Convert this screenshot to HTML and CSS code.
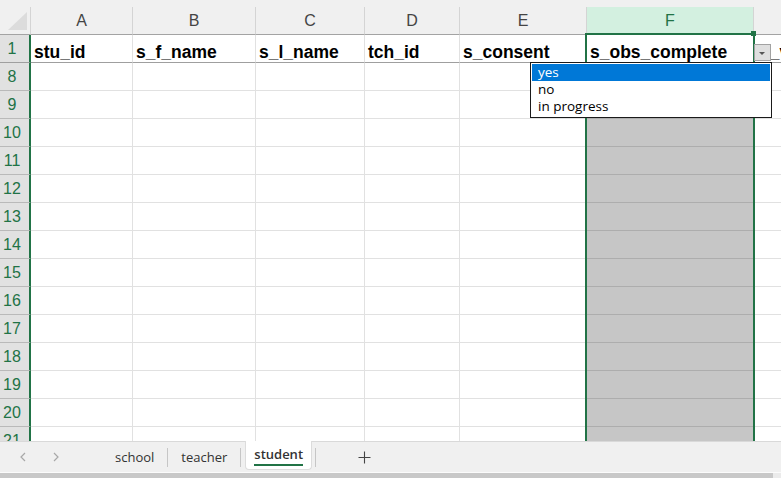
FILE: index.html
```html
<!DOCTYPE html>
<html lang="en">
<head>
	<meta charset="UTF-8">
	<title>student</title>
	<link rel="stylesheet" href="styles.css">
</head>
<body>

	<div class="sheet">
		<div class="strip"></div>

		<!-- Column headers -->
		<div class="row colheads">
			<div class="cell corner">
				<svg width="31" height="27" viewBox="0 0 31 27"><polygon points="8,23 27,23 27,5" fill="#dcdcdc"/></svg>
			</div>
			<div class="cell ca">A</div>
			<div class="cell cb">B</div>
			<div class="cell cc">C</div>
			<div class="cell cd">D</div>
			<div class="cell ce">E</div>
			<div class="cell cf active-col">F</div>
			<div class="cell cg"></div>
		</div>

		<!-- Frozen header row -->
		<div class="row r1">
			<div class="cell rh">1</div>
			<div class="cell ca">stu_id</div>
			<div class="cell cb">s_f_name</div>
			<div class="cell cc">s_l_name</div>
			<div class="cell cd">tch_id</div>
			<div class="cell ce">s_consent</div>
			<div class="cell cf">s_obs_complete</div>
			<div class="cell cg">s_vid</div>
		</div>

		<div class="row"><div class="cell rh">8</div><div class="cell ca"></div><div class="cell cb"></div><div class="cell cc"></div><div class="cell cd"></div><div class="cell ce"></div><div class="cell cf sel"></div><div class="cell cg"></div></div>
		<div class="row"><div class="cell rh">9</div><div class="cell ca"></div><div class="cell cb"></div><div class="cell cc"></div><div class="cell cd"></div><div class="cell ce"></div><div class="cell cf sel"></div><div class="cell cg"></div></div>
		<div class="row"><div class="cell rh">10</div><div class="cell ca"></div><div class="cell cb"></div><div class="cell cc"></div><div class="cell cd"></div><div class="cell ce"></div><div class="cell cf sel"></div><div class="cell cg"></div></div>
		<div class="row"><div class="cell rh">11</div><div class="cell ca"></div><div class="cell cb"></div><div class="cell cc"></div><div class="cell cd"></div><div class="cell ce"></div><div class="cell cf sel"></div><div class="cell cg"></div></div>
		<div class="row"><div class="cell rh">12</div><div class="cell ca"></div><div class="cell cb"></div><div class="cell cc"></div><div class="cell cd"></div><div class="cell ce"></div><div class="cell cf sel"></div><div class="cell cg"></div></div>
		<div class="row"><div class="cell rh">13</div><div class="cell ca"></div><div class="cell cb"></div><div class="cell cc"></div><div class="cell cd"></div><div class="cell ce"></div><div class="cell cf sel"></div><div class="cell cg"></div></div>
		<div class="row"><div class="cell rh">14</div><div class="cell ca"></div><div class="cell cb"></div><div class="cell cc"></div><div class="cell cd"></div><div class="cell ce"></div><div class="cell cf sel"></div><div class="cell cg"></div></div>
		<div class="row"><div class="cell rh">15</div><div class="cell ca"></div><div class="cell cb"></div><div class="cell cc"></div><div class="cell cd"></div><div class="cell ce"></div><div class="cell cf sel"></div><div class="cell cg"></div></div>
		<div class="row"><div class="cell rh">16</div><div class="cell ca"></div><div class="cell cb"></div><div class="cell cc"></div><div class="cell cd"></div><div class="cell ce"></div><div class="cell cf sel"></div><div class="cell cg"></div></div>
		<div class="row"><div class="cell rh">17</div><div class="cell ca"></div><div class="cell cb"></div><div class="cell cc"></div><div class="cell cd"></div><div class="cell ce"></div><div class="cell cf sel"></div><div class="cell cg"></div></div>
		<div class="row"><div class="cell rh">18</div><div class="cell ca"></div><div class="cell cb"></div><div class="cell cc"></div><div class="cell cd"></div><div class="cell ce"></div><div class="cell cf sel"></div><div class="cell cg"></div></div>
		<div class="row"><div class="cell rh">19</div><div class="cell ca"></div><div class="cell cb"></div><div class="cell cc"></div><div class="cell cd"></div><div class="cell ce"></div><div class="cell cf sel"></div><div class="cell cg"></div></div>
		<div class="row"><div class="cell rh">20</div><div class="cell ca"></div><div class="cell cb"></div><div class="cell cc"></div><div class="cell cd"></div><div class="cell ce"></div><div class="cell cf sel"></div><div class="cell cg"></div></div>
		<div class="row"><div class="cell rh">21</div><div class="cell ca"></div><div class="cell cb"></div><div class="cell cc"></div><div class="cell cd"></div><div class="cell ce"></div><div class="cell cf sel"></div><div class="cell cg"></div></div>

		<!-- Column F selection outline -->
		<div class="selection"></div>
		<div class="handle"></div>

		<!-- Data validation dropdown -->
		<div class="dd-btn">
			<svg width="15" height="15" viewBox="0 0 15 15"><polygon points="4,7 10,7 7,10" fill="#555"/></svg>
		</div>
		<div class="dd-list">
			<div class="opt on">yes</div>
			<div class="opt">no</div>
			<div class="opt">in progress</div>
		</div>
	</div>

	<!-- Sheet tabs -->
	<div class="tabs">
		<div class="nav">
			<svg width="8" height="10" viewBox="0 0 8 10"><polyline points="6,1 2,5 6,9" fill="none" stroke="#a8a8a8" stroke-width="1.2"/></svg>
		</div>
		<div class="nav">
			<svg width="8" height="10" viewBox="0 0 8 10"><polyline points="2,1 6,5 2,9" fill="none" stroke="#a8a8a8" stroke-width="1.2"/></svg>
		</div>
		<div class="tab first">school</div>
		<div class="sep"></div>
		<div class="tab">teacher</div>
		<div class="sep"></div>
		<div class="tab current"><span>student</span></div>
		<div class="sep"></div>
		<div class="add">
			<svg width="13" height="13" viewBox="0 0 13 13"><path d="M6.5 0.5v12M0.5 6.5h12" stroke="#444" stroke-width="1.1"/></svg>
		</div>
	</div>

	<div class="scroll"><div class="thumb"></div></div>

</body>
</html>
```

FILE: styles.css
```css
body {
	margin: 0;
	width: 781px;
	height: 478px;
	overflow: hidden;
	background-color: #fff;
	font-family: "Liberation Sans", Arial, sans-serif;
}

.sheet {
	height: 441px;
	overflow: hidden;
	position: relative;
}

.strip {
	height: 7px;
	background-color: #f0f0f0;
}

.row {
	display: flex;
	height: 28px;
}

.cell {
	flex: none;
	box-sizing: border-box;
	height: 28px;
	border-right: 1px solid #e1e1e1;
	border-bottom: 1px solid #e1e1e1;
	overflow: hidden;
	white-space: nowrap;
}

.ca { width: 102px; }
.cb { width: 123px; }
.cc { width: 109px; }
.cd { width: 95px; }
.ce { width: 127px; }
.cf { width: 167px; }
.cg { width: 100px; }

/* Column headers */
.colheads .cell {
	background-color: #f0f0f0;
	border-right-color: #d4d4d4;
	border-bottom-color: #a3a3a3;
	color: #444;
	font-size: 16px;
	display: flex;
	align-items: center;
	justify-content: center;
}

.colheads .corner {
	width: 31px;
	display: block;
}

.colheads .active-col {
	background-color: #d3f0e0;
	color: #217346;
}

/* Row headers */
.rh {
	width: 31px;
	background-color: #e1e1e1;
	border-right: 2px solid #217346;
	border-bottom-color: #b9b9b9;
	color: #217346;
	font-size: 16px;
	padding-right: 5px;
	display: flex;
	align-items: center;
	justify-content: center;
}

/* Frozen title row */
.r1 .cell {
	border-bottom-color: #9f9f9f;
	font-weight: bold;
	font-size: 17.5px;
	line-height: 20px;
	padding-left: 3px;
	display: flex;
	align-items: flex-end;
}

.r1 .cg {
	padding-left: 6px;
}

.r1 .rh {
	font-weight: normal;
	font-size: 16px;
	padding-left: 0;
	align-items: center;
}

.cell.sel {
	background-color: #c6c6c6;
	border-bottom-color: #adadad;
	border-right-color: #c6c6c6;
}

.selection {
	position: absolute;
	left: 585px;
	top: 33px;
	width: 170px;
	height: 420px;
	box-sizing: border-box;
	border: 2px solid #217346;
}

.handle {
	position: absolute;
	left: 751px;
	top: 31px;
	width: 5px;
	height: 5px;
	background-color: #217346;
}

.dd-btn {
	position: absolute;
	left: 754px;
	top: 44px;
	width: 17px;
	height: 17px;
	box-sizing: border-box;
	background-color: #dfdfdf;
	border: 1px solid #a2a2a2;
}

.dd-btn svg {
	display: block;
}

.dd-list {
	position: absolute;
	left: 530px;
	top: 62px;
	width: 242px;
	height: 56px;
	box-sizing: border-box;
	padding: 1px;
	background-color: #fff;
	border: 1px solid #1a1a1a;
	font-family: "Open Sans", sans-serif;
	font-size: 13.5px;
	color: #000;
}

.opt {
	height: 17px;
	line-height: 17px;
	padding-left: 6px;
}

.opt.on {
	background-color: #0078d7;
	color: #fff;
}

/* Sheet tabs */
.tabs {
	height: 31px;
	box-sizing: border-box;
	border-top: 1px solid #d9d9d9;
	background-color: #f0f0f0;
	display: flex;
	align-items: stretch;
	padding-left: 6px;
	font-family: "Open Sans", sans-serif;
	font-size: 13px;
	color: #333;
}

.nav {
	width: 33px;
	display: flex;
	align-items: center;
	justify-content: center;
}

.tab {
	display: flex;
	align-items: center;
	padding: 0 13px 0 13px;
}

.tab.first {
	margin-left: 30px;
}

.tab.current {
	margin: -1px 3px 2px 4px;
	padding: 0 8px;
	background-color: #fff;
	border: 1px solid #dcdcdc;
	border-top: none;
	border-radius: 0 0 4px 4px;
	font-weight: 600;
	align-items: flex-start;
}

.tab.current span {
	margin-top: 4px;
	padding-bottom: 1px;
	border-bottom: 2px solid #217346;
	line-height: 18px;
}

.sep {
	width: 1px;
	height: 19px;
	align-self: center;
	background-color: #c6c6c6;
}

.add {
	margin-left: 42px;
	display: flex;
	align-items: center;
}

.add svg {
	display: block;
}

.scroll {
	height: 6px;
	box-sizing: border-box;
	border-top: 1px solid #fbfbfb;
	background-color: #ebebeb;
}

.thumb {
	width: 773px;
	height: 5px;
	background-color: #c8c8c8;
}
```
